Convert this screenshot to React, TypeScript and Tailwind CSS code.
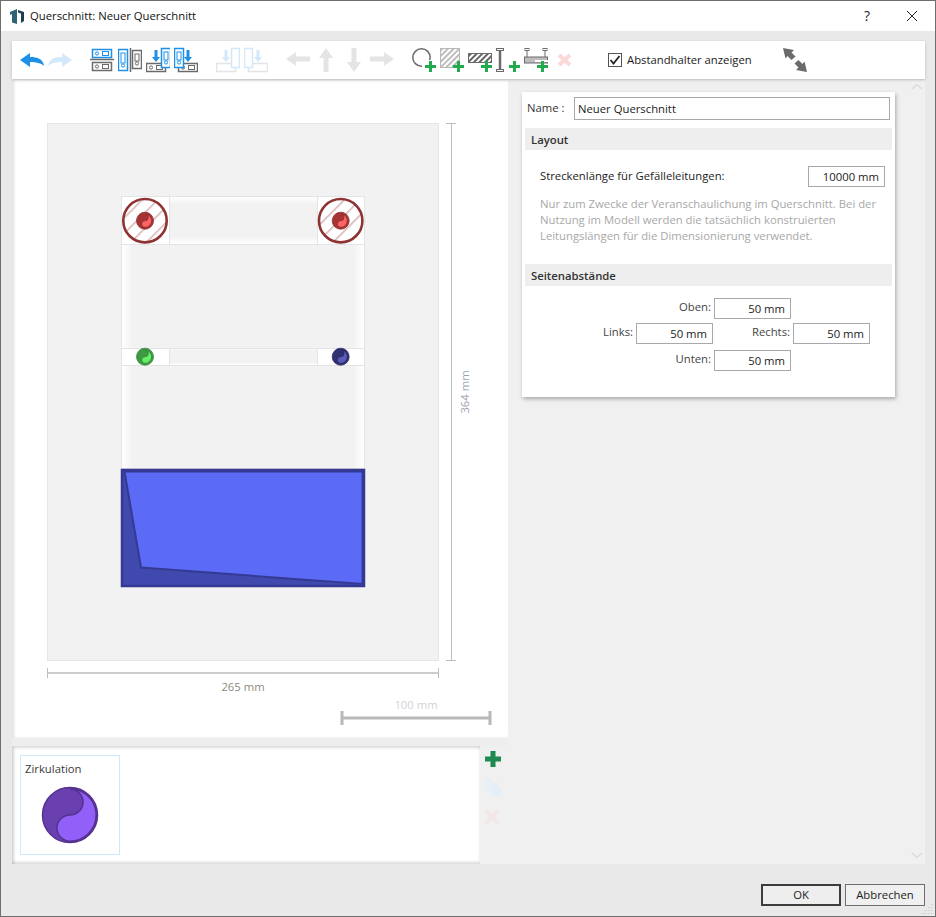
import React from "react";

const BLUE = "#1e90e8";
const GR = "#6b6b6b";
const LB = "#d3e8fa";
const LG = "#e4e4e4";
const GREEN = "#22aa4f";

const font = { fontFamily: '"Open Sans", "Noto Sans", sans-serif' };

function Ic({ w = 24, children }: { w?: number; children: React.ReactNode }) {
  return (
    <svg width={w} height={32} viewBox={`0 0 ${w} 32`} className="shrink-0">
      {children}
    </svg>
  );
}

function Plus({ x, y, c = GREEN }: { x: number; y: number; c?: string }) {
  return <path d={`M${x - 5.5} ${y}H${x + 5.5}M${x} ${y - 5.5}V${y + 5.5}`} stroke={c} strokeWidth={3} fill="none" />;
}

function HBox({ x, y, c, w = 19, h = 8 }: { x: number; y: number; c: string; w?: number; h?: number }) {
  return (
    <g fill="none" stroke={c}>
      <rect x={x + 0.5} y={y + 0.5} width={w} height={h} fill="#fff" strokeWidth={1.5} />
      <circle cx={x + 5} cy={y + 4.5} r={1.6} />
      <rect x={x + 10.5} y={y + 2.5} width={w - 13} height={4} />
    </g>
  );
}

function VBox({ x, y, c, w = 9, h = 20 }: { x: number; y: number; c: string; w?: number; h?: number }) {
  return (
    <g fill="none" stroke={c}>
      <rect x={x + 0.5} y={y + 0.5} width={w} height={h} fill="#fff" strokeWidth={1.5} />
      <circle cx={x + 5} cy={y + h - 4.5} r={1.6} />
      <rect x={x + 3} y={y + 4} width={4} height={h - 11} />
    </g>
  );
}

function DownArrow({ x, y, c }: { x: number; y: number; c: string }) {
  return <path d={`M${x - 1.5} ${y}h3v7h2.5l-4 5l-4-5h2.5z`} fill={c} />;
}

function Toolbar() {
  return (
    <div className="h-[38px] ml-[11px] w-[913px] mt-[10px] bg-white flex items-center pl-2 shadow-[0_1px_3px_rgba(0,0,0,0.2)] relative z-10">
      <div className="flex gap-1">
        <Ic>
          <path d="M0 16L10 9V13C18 13 23 15 24 22C21 19 16 18 10 18V23Z" fill={BLUE} />
        </Ic>
        <Ic>
          <path d="M24 16L14 9V13C6 13 1 15 0 22C3 19 8 18 14 18V23Z" fill={LB} />
        </Ic>
      </div>
      <div className="flex gap-1 ml-[18px]">
        <Ic>
          <HBox x={2} y={5} c={BLUE} />
          <path d="M0 15.5H24" stroke={GR} strokeWidth={1.5} />
          <HBox x={2} y={18} c={GR} />
        </Ic>
        <Ic>
          <VBox x={0} y={5} c={BLUE} h={21} />
          <path d="M12.5 4V28" stroke={GR} strokeWidth={1.5} />
          <VBox x={14} y={6} c={GR} h={18} />
        </Ic>
        <Ic>
          <HBox x={0} y={19} c={GR} />
          <DownArrow x={10} y={6} c={BLUE} />
          <VBox x={15} y={4} c={BLUE} h={19} />
        </Ic>
        <Ic>
          <HBox x={4} y={19} c={GR} />
          <DownArrow x={14} y={6} c={BLUE} />
          <VBox x={0} y={4} c={BLUE} h={19} />
        </Ic>
      </div>
      <div className="flex gap-1 ml-[18px]">
        <Ic>
          <rect x="0.5" y="19.5" width="19" height="8" fill="#fff" stroke={LG} strokeWidth={1.5} />
          <DownArrow x={10} y={6} c={LB} />
          <rect x="15.5" y="4.5" width="8" height="19" fill="#fff" stroke={LB} strokeWidth={1.5} />
        </Ic>
        <Ic>
          <rect x="4.5" y="19.5" width="19" height="8" fill="#fff" stroke={LG} strokeWidth={1.5} />
          <DownArrow x={14} y={6} c={LB} />
          <rect x="0.5" y="4.5" width="8" height="19" fill="#fff" stroke={LB} strokeWidth={1.5} />
        </Ic>
      </div>
      <div className="flex gap-1 ml-[18px]">
        <Ic>
          <path d="M0 15L10 8V12.500H24V17.500H10V22Z" fill={LG} />
        </Ic>
        <Ic>
          <path d="M12 4L19 14H14.500V28H9.500V14H5Z" fill={LG} />
        </Ic>
        <Ic>
          <path d="M12 28L5 18H9.500V4H14.500V18H19Z" fill={LG} />
        </Ic>
        <Ic>
          <path d="M24 15L14 8V12.500H0V17.500H14V22Z" fill={LG} />
        </Ic>
      </div>
      <div className="flex gap-1 ml-[18px]">
        <Ic>
          <circle cx="9.500" cy="13.500" r="8.700" fill="none" stroke={GR} strokeWidth={1.5} />
          <rect x="10" y="16" width="14" height="13" fill="#fff" />
          <Plus x={18.5} y={22.5} />
        </Ic>
        <Ic>
          <defs>
            <pattern id="h1" width="4" height="4" patternUnits="userSpaceOnUse" patternTransform="rotate(-45)">
              <rect width="4" height="4" fill="#fff" />
              <rect width="4" height="2" fill="#bdbdbd" />
            </pattern>
            <pattern id="h2" width="4" height="4" patternUnits="userSpaceOnUse" patternTransform="rotate(-45)">
              <rect width="4" height="4" fill="#fff" />
              <rect width="4" height="2" fill="#666" />
            </pattern>
          </defs>
          <rect x="0.500" y="4.500" width="19" height="19" fill="url(#h1)" stroke="#b8b8b8" />
          <Plus x={18.5} y={22.5} />
        </Ic>
        <Ic>
          <rect x="0.500" y="9.500" width="23" height="9" fill="url(#h2)" stroke={GR} />
          <Plus x={18.5} y={22.5} />
        </Ic>
        <Ic>
          <path d="M4 5V27" stroke={GR} strokeWidth={2.5} />
          <rect x="0.500" y="4.500" width="7" height="2" fill="#fff" stroke={GR} />
          <rect x="0.500" y="25.500" width="7" height="2" fill="#fff" stroke={GR} />
          <Plus x={18.5} y={22.5} />
        </Ic>
        <Ic>
          <path d="M3 6V13M21 6V13" stroke={GR} />
          <rect x="1" y="4.500" width="4" height="2" fill="#fff" stroke={GR} />
          <rect x="19" y="4.500" width="4" height="2" fill="#fff" stroke={GR} />
          <rect x="0.500" y="13" width="23" height="6" fill="#bdbdbd" stroke={GR} />
          <rect x="11" y="16" width="13" height="2" fill="#fff" />
          <Plus x={18.5} y={22.5} />
        </Ic>
        <Ic>
          <path d="M7 11L18 21M18 11L7 21" stroke="#fbd9d9" strokeWidth={4} />
        </Ic>
      </div>
      <label className="flex items-center ml-[32px] text-[11.3px] text-[#1a1a1a]">
        <span className="w-[14px] h-[14px] border border-[#555] bg-white flex items-center justify-center">
          <svg width="12" height="12" viewBox="0 0 12 12">
            <path d="M1.500 6L4.500 9.500L10.500 2" fill="none" stroke="#222" strokeWidth={1.800} />
          </svg>
        </span>
        <span className="ml-[5px] w-[125px] whitespace-nowrap">Abstandhalter anzeigen</span>
      </label>
      <svg width="24" height="26" viewBox="0 0 24 26" className="ml-[31px] shrink-0">
        <path d="M0 1L11 3L8.500 5.500L12.500 9.500L8.500 13L4.500 9L2.500 11.500Z" fill={GR} />
        <path d="M24 25L13 23L15.500 20.500L11.500 16.500L15.500 13L19.500 17L21.500 14.500Z" fill={GR} />
      </svg>
    </div>
  );
}

function YinYang({ cx, cy, r, dark, light, stroke, f = 0.78 }: { cx: number; cy: number; r: number; dark: string; light: string; stroke: string; f?: number }) {
  const k = r * f;
  return (
    <g transform={`translate(${cx} ${cy})`}>
      <circle r={r} fill={dark} stroke={stroke} strokeWidth={r > 15 ? 1.5 : 0.8} />
      <path
        d={`M0 ${-k}A${k} ${k} 0 0 1 0 ${k}A${k / 2} ${k / 2} 0 0 1 0 0A${k / 2} ${k / 2} 0 0 0 0 ${-k}Z`}
        fill={light}
        stroke={stroke}
        strokeWidth={r > 15 ? 1.5 : 0.8}
      />
    </g>
  );
}

/* Coordinates in this drawing are offset from the panel at (12,80) */
function Diagram() {
  const T = (x: number) => x - 12;
  const Y = (y: number) => y - 80;
  const vc = "#bdbdbd";
  return (
    <svg width={496} height={658} viewBox="0 0 496 658" className="block" style={{ fontFamily: '"Open Sans", sans-serif' }}>
      <defs>
        <linearGradient id="gv" x1="0" x2="0" y1="0" y2="1">
          <stop offset="0" stopColor="#fff" />
          <stop offset="0.15" stopColor="#f2f2f2" />
          <stop offset="0.85" stopColor="#f2f2f2" />
          <stop offset="1" stopColor="#fff" />
        </linearGradient>
        <linearGradient id="gh" x1="0" x2="1" y1="0" y2="0">
          <stop offset="0" stopColor="#fff" />
          <stop offset="0.045" stopColor="#f2f2f2" />
          <stop offset="0.955" stopColor="#f2f2f2" />
          <stop offset="1" stopColor="#fff" />
        </linearGradient>
        <pattern id="rh" width="11" height="11" patternUnits="userSpaceOnUse" patternTransform="rotate(-45)">
          <rect width="11" height="11" fill="#fff" />
          <rect width="11" height="1.500" fill="#d6b4b4" />
        </pattern>
      </defs>
      <rect x={T(47.5)} y={Y(123.5)} width={391} height={537} fill="#f2f2f2" stroke="#e6e6e6" />
      {/* section */}
      <rect x={T(121)} y={Y(197)} width={244} height={272} fill="#fff" />
      <rect x={T(169)} y={Y(197)} width={148} height={47} fill="url(#gv)" />
      <rect x={T(122)} y={Y(244)} width={242} height={104} fill="url(#gh)" />
      <rect x={T(169)} y={Y(348)} width={148} height={17} fill="url(#gv)" />
      <rect x={T(122)} y={Y(365)} width={242} height={104} fill="url(#gh)" />
      <g stroke="#e4e4e4" fill="none">
        <rect x={T(121.5)} y={Y(196.5)} width={243} height={272} />
        <path
          d={`M${T(121)} ${Y(244.5)}H${T(365)}M${T(121)} ${Y(348.5)}H${T(365)}M${T(121)} ${Y(365.5)}H${T(365)}M${T(169.5)} ${Y(197)}V${Y(244)}M${T(317.5)} ${Y(197)}V${Y(244)}M${T(169.5)} ${Y(348)}V${Y(365)}M${T(317.5)} ${Y(348)}V${Y(365)}`}
        />
      </g>
      {[145, 340.7].map((x) => (
        <g key={x}>
          <circle cx={T(x)} cy={Y(220.7)} r={21.7} fill="url(#rh)" stroke="#8e3232" strokeWidth={2.6} />
          <YinYang cx={T(x)} cy={Y(220.7)} r={8.5} dark="#a63434" light="#ff6464" stroke="#8e2d2d" />
        </g>
      ))}
      <YinYang cx={T(145)} cy={Y(356.7)} r={8.5} dark="#3e9a42" light="#66ef66" stroke="#35883a" />
      <YinYang cx={T(340.7)} cy={Y(356.7)} r={8.5} dark="#2f3070" light="#5a5cb8" stroke="#2a2b66" />
      {/* duct */}
      <rect x={T(122)} y={Y(470)} width={242} height={116} fill="#4049ae" stroke="#343a94" strokeWidth={2.500} />
      <path
        d={`M${T(124.5)} ${Y(471.5)}H${T(362.5)}V${Y(584)}L${T(141)} ${Y(567.5)}Z`}
        fill="#5b6bf5"
        stroke="#343a94"
        strokeWidth={2}
        strokeLinejoin="miter"
      />
      {/* dimensions */}
      <g stroke={vc} fill="none">
        <path d={`M${T(451.5)} ${Y(123)}V${Y(661)}`} />
        <path d={`M${T(446)} ${Y(123.5)}H${T(456)}M${T(446)} ${Y(660.5)}H${T(456)}`} />
        <path d={`M${T(47)} ${Y(673)}H${T(439)}`} strokeWidth={1.500} />
        <path d={`M${T(47.5)} ${Y(668)}V${Y(678)}M${T(438.5)} ${Y(668)}V${Y(678)}`} />
        <path d={`M${T(342)} ${Y(718)}H${T(490)}`} strokeWidth={3} stroke="#b8b8b8" />
        <path d={`M${T(342)} ${Y(711)}V${Y(725)}M${T(490)} ${Y(711)}V${Y(725)}`} strokeWidth={3} stroke="#b8b8b8" />
      </g>
      <text x={T(243)} y={Y(691)} textAnchor="middle" fontSize={11.3} fill="#8c8a80">265 mm</text>
      <text x={T(416)} y={Y(709)} textAnchor="middle" fontSize={11.3} fill="#cfd3da">100 mm</text>
      <text transform={`translate(${T(469)} ${Y(392)}) rotate(-90)`} textAnchor="middle" fontSize={11.3} fill="#9da2ac">364 mm</text>
    </svg>
  );
}

function Field({ value, className }: { value: string; className: string }) {
  return (
    <div className={`h-[21px] border border-[#a9a9a9] bg-white text-right pr-[5px] text-[11.3px] leading-[19px] text-[#222] ${className}`}>
      {value}
    </div>
  );
}

function Section({ title, className = "" }: { title: string; className?: string }) {
  return (
    <div className={`h-[22px] mx-[3px] bg-[#eeeeee] pl-[6px] text-[11.3px] font-semibold leading-[23px] text-[#333] ${className}`}>
      {title}
    </div>
  );
}

function PropertyPanel() {
  return (
    <div className="ml-[14px] mt-[12px] w-[373px] h-[305px] bg-white shadow-[1px_2px_4px_rgba(0,0,0,0.3)] text-[11.3px] text-[#333]">
      <div className="flex items-center h-[23px] pt-0 mb-[8px] translate-y-[5px]">
        <span className="ml-[5px] w-[47px] text-[#333]">Name :</span>
        <div className="w-[316px] h-[23px] border border-[#a9a9a9] pl-[3px] leading-[21px] text-[#222]">Neuer Querschnitt</div>
      </div>
      <Section title="Layout" className="mt-[13px]" />
      <div className="flex items-center justify-between pl-[18px] pr-[10px] mt-[16px]">
        <span className="text-[#222]">Streckenlänge für Gefälleleitungen:</span>
        <Field value="10000 mm" className="w-[77px]" />
      </div>
      <p className="ml-[18px] mt-[9px] w-[340px] leading-[16px] text-[#a8a8a8]">
        Nur zum Zwecke der Veranschaulichung im Querschnitt. Bei der Nutzung im Modell werden die tatsächlich konstruierten Leitungslängen für die Dimensionierung verwendet.
      </p>
      <Section title="Seitenabstände" className="mt-[20px]" />
      <div className="mt-[12px] flex flex-col text-[#444]">
        <div className="flex items-start">
          <span className="w-[192px] text-right pr-[3px] leading-[18px]">Oben:</span>
          <Field value="50 mm" className="w-[77px]" />
        </div>
        <div className="flex items-start mt-[4px]">
          <span className="w-[114px] text-right pr-[3px] leading-[18px]">Links:</span>
          <Field value="50 mm" className="w-[77px]" />
          <span className="w-[80px] text-right pr-[3px] leading-[18px]">Rechts:</span>
          <Field value="50 mm" className="w-[77px]" />
        </div>
        <div className="flex items-start mt-[6px]">
          <span className="w-[192px] text-right pr-[3px] leading-[18px]">Unten:</span>
          <Field value="50 mm" className="w-[77px]" />
        </div>
      </div>
    </div>
  );
}

function Chevron({ up }: { up?: boolean }) {
  return (
    <svg width="12" height="7" viewBox="0 0 12 7">
      <path d={up ? "M1 6L6 1.500L11 6" : "M1 1L6 5.500L11 1"} fill="none" stroke="#d9d9d9" strokeWidth={1.300} />
    </svg>
  );
}

export default function App() {
  return (
    <div className="relative w-[936px] h-[917px] border border-[#6e6e6e] bg-[#e9e9e9] flex flex-col overflow-hidden" style={font}>
      <div className="h-[30px] shrink-0 bg-white flex items-center pl-[9px] text-[11.3px] text-[#111]">
        <svg width="15" height="15" viewBox="0 0 15 15">
          <path d="M0 3L7 0V15L2 13.500V5L0 6Z" fill="#2f6272" />
          <path d="M8 1L14 3V12L11 14V4.500L8 3.500Z" fill="#1d3f4e" />
        </svg>
        <span className="ml-[5px]">Querschnitt: Neuer Querschnitt</span>
        <span className="ml-auto mr-[11px] w-[10px] text-center text-[14px] leading-none text-[#222]">?</span>
        <svg width="12" height="12" viewBox="0 0 12 12" className="ml-[23px] mr-[17px]">
          <path d="M1 1L11 11M11 1L1 11" stroke="#222" strokeWidth={1} />
        </svg>
      </div>

      <Toolbar />

      <div className="flex ml-[11px] mt-[1px] w-[913px] h-[784px] shrink-0 bg-[#f0f0f0]">
        <div className="w-[496px] shrink-0 flex flex-col gap-2 bg-[#eeeeee]">
          <div className="h-[658px] bg-white shadow-[inset_2px_0_3px_rgba(0,0,0,0.12)]">
            <Diagram />
          </div>
          <div className="flex h-[118px] bg-[#f0f0f0]">
            <div className="w-[468px] bg-white pl-2 pt-[9px] shadow-[inset_2px_2px_3px_rgba(0,0,0,0.14),inset_0_-2px_3px_rgba(0,0,0,0.14)]">
              <div className="w-[100px] h-[100px] border border-[#cdeafd] bg-white">
                <div className="pl-[4px] pt-[4px] text-[11.3px] leading-[17px] text-[#3a3a3a]">Zirkulation</div>
                <svg width="60" height="60" viewBox="0 0 60 60" className="mx-auto mt-[8px]">
                  <YinYang cx={30} cy={30} r={27.500} f={0.95} dark="#6a40b0" light="#9160f8" stroke="#55318f" />
                </svg>
              </div>
            </div>
            <div className="flex flex-col items-center w-[28px]">
              <svg width="18" height="18" viewBox="0 0 18 18" className="mt-[4px] ml-[-2px]">
                <path d="M9 1V17M1 9H17" stroke="#1f8a50" strokeWidth={5} />
              </svg>
              <svg width="18" height="20" viewBox="0 0 18 20" className="mt-[9px] ml-[-2px]">
                <path d="M1 1H8V6H7V14H1Z" fill="#e8f0f7" />
                <path d="M8 6H13V10H17V19H8Z" fill="#e4eef6" />
              </svg>
              <svg width="16" height="16" viewBox="0 0 16 16" className="mt-[12px] ml-[-4px]">
                <path d="M2 2L14 14M14 2L2 14" stroke="#f3e6e6" strokeWidth={4} />
              </svg>
            </div>
          </div>
        </div>
        <div className="flex-1 flex flex-col relative">
          <PropertyPanel />
          <div className="absolute right-[2px] top-[3px]"><Chevron up /></div>
          <div className="absolute right-[2px] bottom-[5px]"><Chevron /></div>
        </div>
      </div>

      <div className="flex justify-end mr-[10px] gap-1 mt-[20px] text-[11.3px] text-[#222]">
        <button className="w-[80px] h-[22px] border-2 border-[#3c3c3c] bg-[#eeeeee] leading-none">OK</button>
        <button className="w-[80px] h-[22px] border border-[#6e6e6e] bg-[#f0f0f0] leading-none">Abbrechen</button>
      </div>

      <svg width="12" height="12" viewBox="0 0 12 12" className="absolute right-[1px] bottom-[1px]">
        <path d="M10 1v1M10 4v1M7 4v1M10 7v1M7 7v1M4 7v1M10 10v1M7 10v1M4 10v1M1 10v1" stroke="#bdbdbd" />
      </svg>
    </div>
  );
}
